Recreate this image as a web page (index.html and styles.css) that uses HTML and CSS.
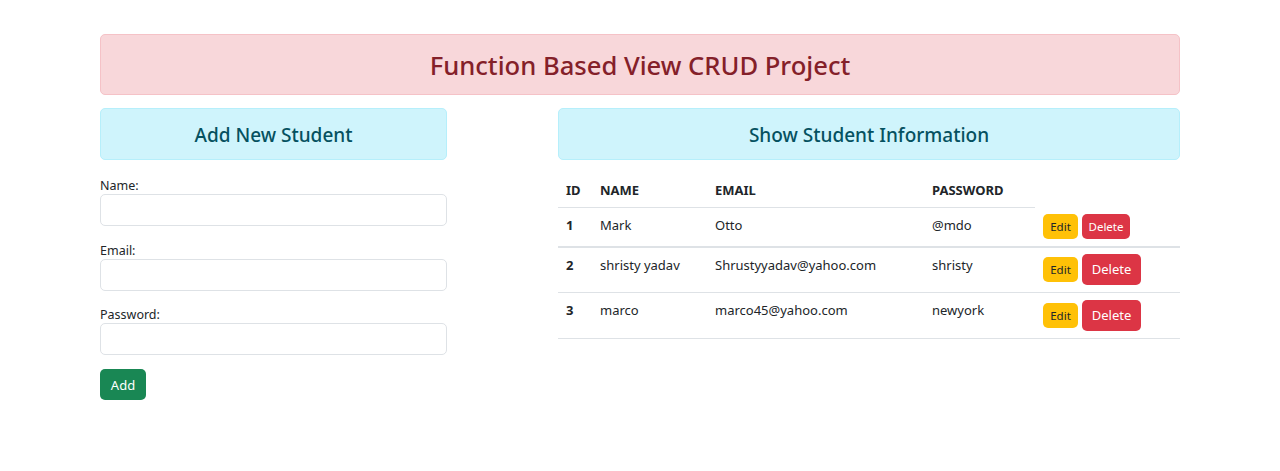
FILE: index.html
```html
<!DOCTYPE html>
<html lang="en">
<head>
<meta charset="utf-8">
<title>Function Based View CRUD Project</title>
<link rel="stylesheet" href="styles.css">
</head>
<body>
<div class="container">
  <div class="banner">Function Based View CRUD Project</div>
  <div class="grid">
    <section class="left">
      <div class="panel-head">Add New Student</div>
      <form class="form">
        <label class="field"><span class="lbl">Name:</span><input class="inp" type="text"></label>
        <label class="field"><span class="lbl">Email:</span><input class="inp" type="email"></label>
        <label class="field"><span class="lbl">Password:</span><input class="inp" type="password"></label>
        <button type="button" class="btn btn-add">Add</button>
      </form>
    </section>
    <section class="right">
      <div class="panel-head">Show Student Information</div>
      <table class="tbl">
        <colgroup>
          <col class="c-id"><col class="c-name"><col class="c-email"><col class="c-pass"><col class="c-act">
        </colgroup>
        <thead>
          <tr><th>ID</th><th>NAME</th><th>EMAIL</th><th>PASSWORD</th></tr>
        </thead>
        <tbody>
          <tr class="first">
            <th>1</th><td>Mark</td><td>Otto</td><td>@mdo</td>
            <td class="act"><button class="btn btn-edit btn-sm">Edit</button><button class="btn btn-del btn-sm">Delete</button></td>
          </tr>
          <tr>
            <th>2</th><td>shristy yadav</td><td>Shrustyyadav@yahoo.com</td><td>shristy</td>
            <td class="act"><button class="btn btn-edit btn-sm">Edit</button><button class="btn btn-del btn-md">Delete</button></td>
          </tr>
          <tr class="last">
            <th>3</th><td>marco</td><td>marco45@yahoo.com</td><td>newyork</td>
            <td class="act"><button class="btn btn-edit btn-sm">Edit</button><button class="btn btn-del btn-md">Delete</button></td>
          </tr>
        </tbody>
      </table>
    </section>
  </div>
</div>
</body>
</html>
```
FILE: styles.css
```css
* { box-sizing: border-box; }
body {
  margin: 0;
  font-family: "Noto Sans", "Open Sans", sans-serif;
  color: #212529;
  background: #fff;
  font-size: 13px;
}
.container {
  width: 1080px;
  margin: 34px auto 0;
}
.banner {
  background: #f8d7da;
  border: 1px solid #f5c2c7;
  color: #842029;
  border-radius: 5px;
  text-align: center;
  font-size: 25.6px;
  font-weight: 500;
  line-height: 31px;
  padding: 15px 0 13px;
}
.grid {
  display: grid;
  grid-template-columns: 347px 622px;
  justify-content: space-between;
  margin-top: 13px;
}
.panel-head {
  background: #cff4fc;
  border: 1px solid #b6effb;
  color: #055160;
  border-radius: 5px;
  text-align: center;
  font-size: 19px;
  font-weight: 500;
  line-height: 24px;
  padding: 14px 0 12px;
}
.form {
  display: flex;
  flex-direction: column;
  margin-top: 17px;
}
.field {
  display: flex;
  flex-direction: column;
  margin-bottom: 15.5px;
}
.lbl {
  font-size: 12.5px;
  line-height: 17px;
  color: #212529;
}
.inp {
  height: 32px;
  border: 1px solid #dee2e6;
  border-radius: 5px;
  font: inherit;
}
.btn {
  font-family: inherit;
  border: 1px solid transparent;
  border-radius: 5px;
  cursor: pointer;
  vertical-align: top;
}
.btn-add {
  align-self: flex-start;
  background: #198754;
  color: #fff;
  font-size: 13px;
  height: 31px;
  width: 46px;
  padding: 0;
  margin-top: -1.5px;
}
.tbl {
  width: 100%;
  border-collapse: collapse;
  table-layout: fixed;
  margin-top: 11px;
  font-size: 13px;
}
.c-id { width: 34px; }
.c-name { width: 115px; }
.c-email { width: 217px; }
.c-pass { width: 111px; }
.c-act { width: 145px; }
.tbl th, .tbl td {
  text-align: left;
  vertical-align: top;
  padding: 7px 8px 8px;
  line-height: 20px;
  border-bottom: 1px solid #dee2e6;
}
.tbl thead th {
  font-weight: 700;
  padding: 9px 8px 7px;
}
.tbl tr.first > * { border-bottom: 2px solid #dee2e6; }
.tbl tbody th { font-weight: 700; }
.tbl td.act { padding: 6px 0 7px 8px; white-space: nowrap; }
.tbl tr.last td.act { padding: 7px 0 7px 8px; }
.btn-edit {
  background: #ffc107;
  color: #212529;
}
.btn-del {
  background: #dc3545;
  color: #fff;
  margin-left: 4px;
}
.btn-sm {
  font-size: 11.5px;
  height: 25px;
  padding: 0;
}
.btn-edit.btn-sm { width: 35px; }
.btn-del.btn-sm { width: 48px; }
.btn-md {
  font-size: 13px;
  height: 31px;
  width: 59px;
  padding: 0;
}
tr:not(.first) .act .btn-edit { margin-top: 3px; }
```
